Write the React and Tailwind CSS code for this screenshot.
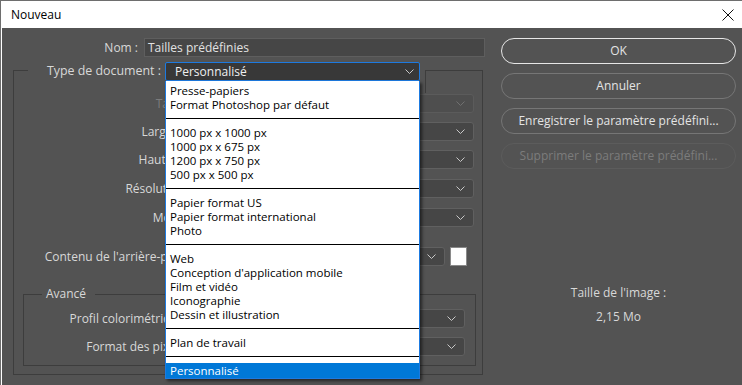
import React from "react";

const Chevron = ({ className = "" }) => (
  <svg width="9" height="5" viewBox="0 0 9 5" className={className}>
    <polyline points="0.5,0.5 4.5,4.5 8.5,0.5" fill="none" stroke="currentColor" strokeWidth="1" />
  </svg>
);

const Drop = ({ w, disabled }) => (
  <div
    className={
      "h-[19px] rounded-[3px] border flex items-center justify-end pr-[8px] " +
      (disabled ? "border-[#5b5b5b] bg-[#4e4e4e] text-[#707070] " : "border-[#606060] bg-[#464646] text-[#c8c8c8] ") +
      w
    }
  >
    <Chevron />
  </div>
);

const Row = ({ label, mt, dim, w = "w-[277px]", lw = "w-[177px]", children }) => (
  <div className={"flex items-center h-[19px] " + mt}>
    <div className={"text-right whitespace-nowrap " + lw + (dim ? " text-[#7c7c7c]" : " text-[#d8d8d8]")}>{label}</div>
    <div className="ml-[6px] flex items-center">
      <Drop w={w} disabled={dim} />
      {children}
    </div>
  </div>
);

const Item = ({ children }) => (
  <div className="h-[14px] leading-[14px] pt-[1px] pl-[4px] whitespace-nowrap">{children}</div>
);
const Sep = () => <div className="mt-[7px] mb-[6px] h-px bg-black" />;

export default function App() {
  return (
    <div
      className="w-[742px] h-[385px] overflow-hidden relative bg-white border-l border-t border-[#6e6e6e] flex flex-col text-[12px]"
      style={{ fontFamily: '"Open Sans", "Noto Sans", sans-serif' }}
    >
      {/* Title bar */}
      <div className="h-[27px] flex items-center justify-between pl-[10px] pr-[8px] bg-white text-black">
        <span className="leading-none">Nouveau</span>
        <svg width="12" height="12" viewBox="0 0 12 12">
          <line x1="0.5" y1="0.5" x2="11.5" y2="11.5" stroke="#111" strokeWidth="1" />
          <line x1="11.5" y1="0.5" x2="0.5" y2="11.5" stroke="#111" strokeWidth="1" />
        </svg>
      </div>

      {/* Body */}
      <div className="flex-1 ml-[1px] bg-[#535353] flex">
        {/* Left column */}
        <div className="w-[488px] flex flex-col">
          <div className="mt-[10px] h-[19px] flex items-center">
            <div className="w-[136px] text-right text-[#d8d8d8]">Nom :</div>
            <div className="ml-[6px] w-[341px] h-[19px] border border-[#5e5e5e] bg-[#464646] text-[#e2e2e2] flex items-center pl-[3px]">
              Tailles prédéfinies
            </div>
          </div>

          {/* Group box */}
          <div className="mt-[13px] ml-[11px] w-[470px] h-[305px] border-x border-b border-[#3d3d3d] flex flex-col">
            <div className="-mt-[8px] h-[19px] flex items-start">
              <div className="mt-[8px] w-[14px] h-px bg-[#3d3d3d]" />
              <div className="w-[133px] h-[19px] flex items-center justify-end text-[#d8d8d8] text-[12.4px] whitespace-nowrap">
                Type de document :
              </div>
              <div className="ml-[4px] w-[255px] h-[19px] rounded-[2px] border border-[#1d7ae0] bg-[#383838] text-[#f0f0f0] flex items-center justify-between pl-[9px] pr-[5px]">
                <span>Personnalisé</span>
                <Chevron className="text-[#c8c8c8]" />
              </div>
              <div className="ml-[5px] mt-[8px] flex-1 h-[23px] border-t border-l border-[#3d3d3d]" />
            </div>

            <Row label="Taille :" mt="mt-[13px]" dim />
            <Row label="Largeur :" mt="mt-[9px]" />
            <Row label="Hauteur :" mt="mt-[9px]" />
            <Row label="Résolution :" mt="mt-[10px]" />
            <Row label="Mode :" mt="mt-[10px]" />
            <Row label="Contenu de l'arrière-plan :" mt="mt-[20px]" w="w-[248px]">
              <div className="ml-[5px] w-[17px] h-[19px] bg-white border border-[#8a8a8a]" />
            </Row>

            {/* Avancé */}
            <div className="mt-[28px] ml-[9px] w-[453px] h-[72px] border-x border-b border-[#3d3d3d] flex flex-col">
              <div className="-mt-[8px] h-[16px] flex items-center">
                <div className="w-[18px] h-px bg-[#3d3d3d]" />
                <span className="px-[4px] text-[#d8d8d8]">Avancé</span>
                <div className="ml-[5px] flex-1 h-px bg-[#3d3d3d]" />
              </div>
              <Row label="Profil colorimétrique :" mt="mt-[7px]" lw="w-[167px]" w="w-[268px]" />
              <Row label="Format des pixels :" mt="mt-[9px]" lw="w-[167px]" w="w-[268px]" />
            </div>
          </div>
        </div>

        {/* Right column */}
        <div className="ml-[11px] w-[235px] flex flex-col text-[#e4e4e4]">
          <div className="mt-[10px] h-[26px] rounded-full border border-[#e6e6e6] flex items-center justify-center">OK</div>
          <div className="mt-[9px] h-[26px] rounded-full border border-[#767676] flex items-center justify-center">Annuler</div>
          <div className="mt-[9px] h-[26px] rounded-full border border-[#767676] flex items-center justify-center">
            Enregistrer le paramètre prédéfini...
          </div>
          <div className="mt-[9px] h-[26px] rounded-full border border-[#5c5c5c] text-[#7c7c7c] flex items-center justify-center">
            Supprimer le paramètre prédéfini...
          </div>
          <div className="mt-[117px] h-[14px] leading-[14px] text-center text-[#d8d8d8]">Taille de l'image :</div>
          <div className="mt-[10px] h-[14px] leading-[14px] text-center text-[#d8d8d8]">2,15 Mo</div>
        </div>
      </div>

      {/* Open dropdown list */}
      <div className="absolute left-[164px] top-[80px] w-[255px] h-[298px] bg-white border-x border-b border-[#1d7ae0] text-black text-[11.5px] pt-[2px] shadow-[2px_2px_3px_rgba(0,0,0,0.55)] flex flex-col">
        <Item>Presse-papiers</Item>
        <Item>Format Photoshop par défaut</Item>
        <Sep />
        <Item>1000 px x 1000 px</Item>
        <Item>1000 px x 675 px</Item>
        <Item>1200 px x 750 px</Item>
        <Item>500 px x 500 px</Item>
        <Sep />
        <Item>Papier format US</Item>
        <Item>Papier format international</Item>
        <Item>Photo</Item>
        <Sep />
        <Item>Web</Item>
        <Item>Conception d'application mobile</Item>
        <Item>Film et vidéo</Item>
        <Item>Iconographie</Item>
        <Item>Dessin et illustration</Item>
        <Sep />
        <Item>Plan de travail</Item>
        <Sep />
        <div className="flex-1 bg-[#0078d7] text-white pl-[4px] pt-[1px] leading-[14px] whitespace-nowrap">Personnalisé</div>
      </div>
    </div>
  );
}
